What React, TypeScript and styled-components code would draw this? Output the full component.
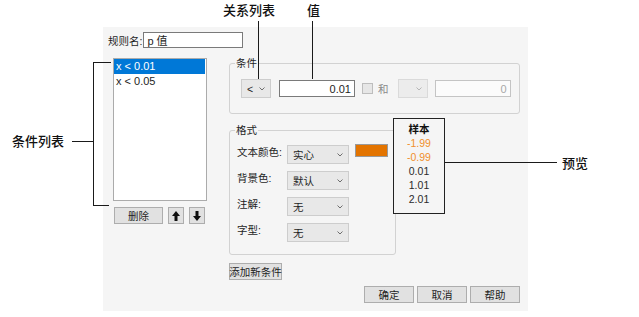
import React from "react";
import styled, { createGlobalStyle } from "styled-components";

const UI_FONT = `"Liberation Sans", "Noto Sans CJK SC", sans-serif`;
const CJK_FONT = `"Noto Sans CJK SC", "Liberation Sans", sans-serif`;

const GlobalStyle = createGlobalStyle`
  html, body {
    margin: 0;
    padding: 0;
    background: #ffffff;
  }
  * {
    box-sizing: border-box;
  }
`;

const Page = styled.div`
  position: relative;
  width: 639px;
  height: 317px;
  padding: 27px 0 0 103px;
  overflow: hidden;
  font-family: ${UI_FONT};
`;

// dialog itself
const Dialog = styled.div`
  width: 425px;
  height: 284px;
  background: #f5f5f5;
  padding: 5px 8px 0 5px;
  display: flex;
  flex-direction: column;
  font-size: 10.5px;
  color: #1e1e1e;
`;

const NameRow = styled.div`
  display: flex;
  align-items: center;
  height: 16px;
`;

const Label = styled.span`
  font-family: ${UI_FONT};
  white-space: nowrap;
`;

const TextBox = styled.div<{ $w: number; $h?: number; $align?: string; $disabled?: boolean }>`
  width: ${(p) => p.$w}px;
  height: ${(p) => p.$h ?? 17}px;
  margin-left: 1px;
  background: ${(p) => (p.$disabled ? "#fbfbfb" : "#ffffff")};
  border: 1px solid ${(p) => (p.$disabled ? "#c4c4c4" : "#7a7a7a")};
  display: flex;
  align-items: center;
  justify-content: ${(p) => p.$align ?? "flex-start"};
  padding: 0 3px;
  font-size: 11px;
  color: ${(p) => (p.$disabled ? "#a8a8a8" : "#1e1e1e")};
`;

const Main = styled.div`
  display: flex;
  align-items: flex-start;
  margin-top: 10px;
`;

const LeftCol = styled.div`
  width: 94px;
  margin-left: 5px;
  display: flex;
  flex-direction: column;
`;

const ListBox = styled.div`
  height: 143px;
  background: #ffffff;
  border: 1px solid #ababab;
  padding-right: 1px;
`;

const ListItem = styled.div<{ $selected?: boolean }>`
  height: 15px;
  line-height: 15px;
  padding-left: 2px;
  font-size: 11px;
  background: ${(p) => (p.$selected ? "#0078d7" : "transparent")};
  color: ${(p) => (p.$selected ? "#ffffff" : "#1e1e1e")};
`;

const ButtonRow = styled.div`
  display: flex;
  gap: 5px;
  margin: 6px 0 0 1px;
`;

const Button = styled.div<{ $w: number }>`
  width: ${(p) => p.$w}px;
  height: 17px;
  background: #e1e1e1;
  border: 1px solid #adadad;
  display: flex;
  align-items: center;
  justify-content: center;
  font-size: 10.5px;
  color: #1e1e1e;
  white-space: nowrap;
`;

const RightCol = styled.div`
  width: 291px;
  margin-left: 22px;
  display: flex;
  flex-direction: column;
`;

const GroupBox = styled.div<{ $w: number; $h: number }>`
  position: relative;
  width: ${(p) => p.$w}px;
  height: ${(p) => p.$h}px;
  border: 1px solid #d2d2d2;
  border-radius: 3px;
`;

const Legend = styled.span`
  position: absolute;
  top: -7px;
  left: 5px;
  padding: 0 1px;
  line-height: 13px;
  background: #f5f5f5;
  font-size: 10.5px;
`;

const CondRow = styled.div`
  display: flex;
  align-items: center;
  padding: 15px 0 0 11px;
`;

const Select = styled.div<{ $w: number; $disabled?: boolean }>`
  width: ${(p) => p.$w}px;
  height: 19px;
  background: ${(p) => (p.$disabled ? "#ececec" : "#e8e8e8")};
  border: 1px solid ${(p) => (p.$disabled ? "#dadada" : "#cdcdcd")};
  display: flex;
  align-items: center;
  justify-content: space-between;
  padding: 0 5px 0 5px;
  font-size: 10.5px;
  color: #1e1e1e;
`;

const Check = styled.div`
  width: 11px;
  height: 11px;
  margin-left: 7px;
  background: #e6e6e6;
  border: 1px solid #bdbdbd;
`;

const DimText = styled.span`
  margin: 0 9px 0 5px;
  color: #8a8a8a;
  font-size: 10.5px;
`;

const FormatRow = styled.div`
  display: flex;
  align-items: flex-start;
  margin-top: 16px;
`;

const FormatGrid = styled.div`
  display: flex;
  flex-direction: column;
  gap: 7px;
  padding: 14px 0 0 7px;
`;

const FormatLine = styled.div`
  display: flex;
  align-items: flex-start;
`;

const FormatLabel = styled.span`
  width: 50px;
  padding-top: 1px;
  line-height: 13px;
`;

const Swatch = styled.div`
  width: 33px;
  height: 13px;
  margin: -1px 0 0 6px;
  background: #e37400;
  border: 1px solid #9a9a9a;
`;

const Preview = styled.div`
  position: relative;
  z-index: 1;
  width: 52px;
  height: 96px;
  margin: -12px 0 0 -3px;
  padding-top: 3px;
  background: #f5f5f5;
  border: 1px solid #222222;
  display: flex;
  flex-direction: column;
  align-items: center;
  line-height: 14px;
  font-size: 10.5px;
`;

const PreviewHead = styled.span`
  font-weight: bold;
  color: #111111;
`;

const PreviewValue = styled.span<{ $color: string }>`
  color: ${(p) => p.$color};
`;

const Footer = styled.div`
  display: flex;
  justify-content: flex-end;
  gap: 3px;
  margin-top: 6px;
`;

// callouts drawn over the screenshot
const CalloutText = styled.span<{ $x: number; $y: number }>`
  position: absolute;
  left: ${(p) => p.$x}px;
  top: ${(p) => p.$y}px;
  font-family: ${CJK_FONT};
  font-size: 13px;
  font-weight: 500;
  line-height: 14px;
  color: #111111;
  white-space: nowrap;
`;

const Line = styled.div<{ $x: number; $y: number; $w: number; $h: number }>`
  position: absolute;
  left: ${(p) => p.$x}px;
  top: ${(p) => p.$y}px;
  width: ${(p) => p.$w}px;
  height: ${(p) => p.$h}px;
  background: #1a1a1a;
`;

const Chevron = ({ color = "#6e6e6e" }: { color?: string }) => (
  <svg width="6" height="4" viewBox="0 0 6 4">
    <path d="M0.5 0.5 L3 3 L5.5 0.5" fill="none" stroke={color} strokeWidth="1" />
  </svg>
);

const Arrow = ({ down }: { down?: boolean }) => (
  <svg width="8" height="10" viewBox="0 0 8 10">
    <path
      d={down ? "M4 10 L8 5 L5.5 5 L5.5 0 L2.5 0 L2.5 5 L0 5 Z" : "M4 0 L8 5 L5.5 5 L5.5 10 L2.5 10 L2.5 5 L0 5 Z"}
      fill="#111"
    />
  </svg>
);

const formatRows = [
  { label: "文本颜色:", value: "实心", swatch: true },
  { label: "背景色:", value: "默认" },
  { label: "注解:", value: "无" },
  { label: "字型:", value: "无" },
];

const samples = [
  { v: "-1.99", c: "#f0902c" },
  { v: "-0.99", c: "#f0902c" },
  { v: "0.01", c: "#2a2a2a" },
  { v: "1.01", c: "#2a2a2a" },
  { v: "2.01", c: "#2a2a2a" },
];

const App = () => {
  return (
    <Page>
      <GlobalStyle />
      <Dialog>
        <NameRow>
          <Label>规则名:</Label>
          <TextBox $w={100} $h={16}>p 值</TextBox>
        </NameRow>
        <Main>
          <LeftCol>
            <ListBox>
              <ListItem $selected>x &lt; 0.01</ListItem>
              <ListItem>x &lt; 0.05</ListItem>
            </ListBox>
            <ButtonRow>
              <Button $w={49}>删除</Button>
              <Button $w={16}>
                <Arrow />
              </Button>
              <Button $w={16}>
                <Arrow down />
              </Button>
            </ButtonRow>
          </LeftCol>
          <RightCol>
            <GroupBox $w={291} $h={51} style={{ marginTop: 5 }}>
              <Legend>条件</Legend>
              <CondRow>
                <Select $w={30}>
                  <span>&lt;</span>
                  <Chevron />
                </Select>
                <TextBox $w={76} $align="flex-end" style={{ marginLeft: 8 }}>
                  0.01
                </TextBox>
                <Check />
                <DimText>和</DimText>
                <Select $w={30} $disabled>
                  <span />
                  <Chevron color="#b5b5b5" />
                </Select>
                <TextBox $w={76} $align="flex-end" $disabled style={{ marginLeft: 7 }}>
                  0
                </TextBox>
              </CondRow>
            </GroupBox>
            <FormatRow>
              <GroupBox $w={167} $h={125}>
                <Legend>格式</Legend>
                <FormatGrid>
                  {formatRows.map((r) => (
                    <FormatLine key={r.label}>
                      <FormatLabel>{r.label}</FormatLabel>
                      <Select $w={62}>
                        <span>{r.value}</span>
                        <Chevron />
                      </Select>
                      {r.swatch && <Swatch />}
                    </FormatLine>
                  ))}
                </FormatGrid>
              </GroupBox>
              <Preview>
                <PreviewHead>样本</PreviewHead>
                {samples.map((s) => (
                  <PreviewValue key={s.v} $color={s.c}>
                    {s.v}
                  </PreviewValue>
                ))}
              </Preview>
            </FormatRow>
            <Button $w={53} style={{ marginTop: 8 }}>
              添加新条件
            </Button>
          </RightCol>
        </Main>
        <Footer>
          <Button $w={50}>确定</Button>
          <Button $w={50}>取消</Button>
          <Button $w={50}>帮助</Button>
        </Footer>
      </Dialog>

      <CalloutText $x={223} $y={3}>关系列表</CalloutText>
      <Line $x={258} $y={21} $w={1} $h={58} />
      <CalloutText $x={307} $y={3}>值</CalloutText>
      <Line $x={312} $y={21} $w={1} $h={58} />

      <CalloutText $x={12} $y={134}>条件列表</CalloutText>
      <Line $x={72} $y={141} $w={21} $h={1} />
      <Line $x={93} $y={62} $w={1} $h={144} />
      <Line $x={93} $y={62} $w={18} $h={1} />
      <Line $x={93} $y={205} $w={16} $h={1} />

      <Line $x={445} $y={162} $w={112} $h={1} />
      <CalloutText $x={562} $y={156}>预览</CalloutText>
    </Page>
  );
};

export default App;
